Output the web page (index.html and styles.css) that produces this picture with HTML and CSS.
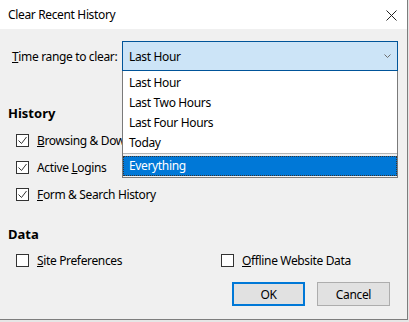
FILE: index.html
```html
<!DOCTYPE html>
<html>
<head>
<meta charset="utf-8">
<link rel="stylesheet" href="styles.css">
</head>
<body>
<div class="dialog">
  <div class="titlebar">
    <span class="title">Clear Recent History</span>
    <svg class="close" width="11" height="11" viewBox="0 0 11 11"><path d="M0.5 0.5L10.5 10.5M10.5 0.5L0.5 10.5" stroke="#222" stroke-width="1" fill="none"/></svg>
  </div>
  <div class="content">
    <div class="range-row">
      <span class="range-label"><u>T</u>ime range to clear:</span>
      <div class="select-wrap">
        <div class="select">
          <span>Last Hour</span>
          <svg class="chev" width="7" height="4" viewBox="0 0 7 4"><path d="M0.5 0.5L3.5 3.5L6.5 0.5" stroke="#6d6d6d" stroke-width="1" fill="none"/></svg>
        </div>
        <div class="dropdown">
          <div class="opts">
            <div class="opt">Last Hour</div>
            <div class="opt">Last Two Hours</div>
            <div class="opt">Last Four Hours</div>
            <div class="opt">Today</div>
          </div>
          <div class="opt selected">Everything</div>
        </div>
      </div>
    </div>

    <div class="heading">History</div>
    <div class="checks">
      <label class="check"><span class="box checked"><svg width="11" height="11" viewBox="0 0 11 11"><path d="M1.5 5.5L4.5 8.5L9.5 2" stroke="#333" stroke-width="1" fill="none"/></svg></span><span><u>B</u>rowsing &amp; Download History</span></label>
      <label class="check"><span class="box checked"><svg width="11" height="11" viewBox="0 0 11 11"><path d="M1.5 5.5L4.5 8.5L9.5 2" stroke="#333" stroke-width="1" fill="none"/></svg></span><span>Active <u>L</u>ogins</span></label>
      <label class="check"><span class="box checked"><svg width="11" height="11" viewBox="0 0 11 11"><path d="M1.5 5.5L4.5 8.5L9.5 2" stroke="#333" stroke-width="1" fill="none"/></svg></span><span><u>F</u>orm &amp; Search History</span></label>
    </div>

    <div class="heading data">Data</div>
    <div class="data-row">
      <label class="check col"><span class="box"></span><span><u>S</u>ite Preferences</span></label>
      <label class="check"><span class="box"></span><span><u>O</u>ffline Website Data</span></label>
    </div>

    <div class="buttons">
      <button class="btn default">OK</button>
      <button class="btn">Cancel</button>
    </div>
  </div>
</div>
</body>
</html>
```
FILE: styles.css
```css
html, body {
  margin: 0;
  padding: 0;
}
body {
  width: 409px;
  height: 322px;
  background: #e6e6e6;
  font-family: "Noto Sans", "Open Sans", sans-serif;
  font-size: 12px;
  color: #000;
  overflow: hidden;
}
.dialog {
  width: 407px;
  height: 319px;
  background: #f0f0f0;
  border-right: 1px solid #7d7d7d;
  border-bottom: 1px solid #7d7d7d;
  display: flex;
  flex-direction: column;
}
.titlebar {
  height: 29px;
  background: #fff;
  display: flex;
  align-items: center;
  justify-content: space-between;
  padding: 0 10px 0 8px;
  flex-shrink: 0;
}
.title {
  font-size: 12px;
  letter-spacing: -0.35px;
  margin-top: -1px;
}
.close {
  display: block;
  margin-top: 1px;
}
.content {
  display: flex;
  flex-direction: column;
  padding: 12px 0 0 0;
}
.range-row {
  display: flex;
  align-items: center;
  padding-left: 12px;
}
.range-label {
  width: 110px;
  letter-spacing: -0.35px;
}
.select-wrap {
  position: relative;
  width: 276px;
}
.select {
  height: 28px;
  background: #cce4f7;
  border: 1px solid #005499;
  display: flex;
  align-items: center;
  justify-content: space-between;
  padding: 0 6px 0 6px;
  letter-spacing: -0.35px;
}
.chev {
  display: block;
}
.dropdown {
  position: absolute;
  left: 0;
  top: 30px;
  width: 274px;
  height: 106px;
  background: #f0f0f0;
  border: 1px solid #7a7a7a;
  border-top: none;
  z-index: 5;
  display: flex;
  flex-direction: column;
}
.opts {
  background: #fff;
  padding-top: 2px;
  height: 80px;
  border-bottom: 1px solid #b5b5b5;
}
.opt {
  height: 20px;
  line-height: 20px;
  padding-left: 6px;
  letter-spacing: -0.35px;
}
.opt.selected {
  margin-top: 2px;
  height: 20px;
  line-height: 20px;
  background: #0078d7;
  color: #fff;
  outline: 1px dotted #333;
  outline-offset: -1px;
}
.heading {
  font-weight: bold;
  font-size: 13px;
  line-height: 18px;
  padding-left: 8px;
  margin-top: 33px;
}
.heading.data {
  margin-top: 17px;
}
.checks {
  display: flex;
  flex-direction: column;
  margin-top: 5px;
  padding-left: 16px;
}
.check {
  height: 27px;
  display: flex;
  align-items: center;
  gap: 8px;
  letter-spacing: -0.35px;
  white-space: nowrap;
}
.box {
  width: 11px;
  height: 11px;
  border: 1px solid #333;
  background: #fff;
  display: flex;
  align-items: center;
  justify-content: center;
  flex-shrink: 0;
}
.box svg {
  display: block;
}
.data-row {
  display: flex;
  margin-top: 4px;
  padding-left: 16px;
}
.col {
  width: 205px;
}
.buttons {
  display: flex;
  justify-content: flex-end;
  gap: 12px;
  padding-right: 17px;
  margin-top: 8px;
}
.btn {
  width: 73px;
  height: 24px;
  background: #e1e1e1;
  border: 1px solid #adadad;
  font-family: "Noto Sans", "Open Sans", sans-serif;
  font-size: 12px;
  color: #000;
  padding: 0;
  letter-spacing: -0.35px;
}
.btn.default {
  border: 2px solid #0078d7;
}
```
